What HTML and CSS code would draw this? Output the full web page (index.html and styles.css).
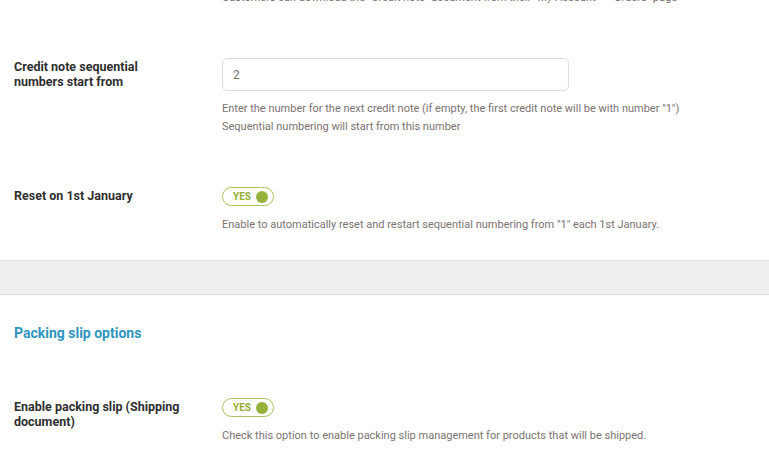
FILE: index.html
```html
<!DOCTYPE html>
<html>
<head>
<meta charset="utf-8">
<link rel="stylesheet" href="styles.css">
</head>
<body>
<div class="section">
  <div class="row row-top">
    <div class="label"></div>
    <div class="control">
      <p class="desc">Customers can download the "Credit note" document from their "My Account" &gt; "Orders" page</p>
    </div>
  </div>
  <div class="row row-number">
    <div class="label">Credit note sequential numbers start from</div>
    <div class="control">
      <input class="text-input" type="text" value="2">
      <p class="desc desc-after-input">Enter the number for the next credit note (if empty, the first credit note will be with number "1")<br>Sequential numbering will start from this number</p>
    </div>
  </div>
  <div class="row row-reset">
    <div class="label">Reset on 1st January</div>
    <div class="control">
      <span class="toggle"><span class="toggle-text">YES</span><span class="toggle-dot"></span></span>
      <p class="desc desc-after-toggle">Enable to automatically reset and restart sequential numbering from "1" each 1st January.</p>
    </div>
  </div>
</div>
<div class="band"></div>
<div class="section">
  <h2 class="heading">Packing slip options</h2>
  <div class="row row-packing">
    <div class="label">Enable packing slip (Shipping document)</div>
    <div class="control">
      <span class="toggle"><span class="toggle-text">YES</span><span class="toggle-dot"></span></span>
      <p class="desc desc-after-toggle">Check this option to enable packing slip management for products that will be shipped.</p>
    </div>
  </div>
</div>
</body>
</html>
```
FILE: styles.css
```css
html, body {
  margin: 0;
  padding: 0;
  background: #ffffff;
  overflow: hidden;
}
body {
  font-family: Roboto, "Liberation Sans", sans-serif;
  width: 769px;
  height: 452px;
}
.section {
  padding-left: 14px;
}
.row {
  display: flex;
  align-items: flex-start;
}
.label {
  width: 208px;
  flex: 0 0 208px;
  font-size: 12.5px;
  font-weight: 700;
  line-height: 15px;
  color: #2f2f2f;
  padding-top: 1px;
  padding-right: 36px;
  box-sizing: border-box;
}
.control {
  display: flex;
  flex-direction: column;
  align-items: flex-start;
}
.desc {
  margin: 0;
  font-size: 11px;
  line-height: 18px;
  color: #7b7272;
}
.row-top {
  margin-top: -11px;
}
.row-number {
  margin-top: 51px;
}
.text-input {
  width: 347px;
  height: 33px;
  box-sizing: border-box;
  border: 1px solid #dddddd;
  border-radius: 5px;
  padding: 0 10px;
  font-family: Roboto, "Liberation Sans", sans-serif;
  font-size: 12px;
  color: #7b7272;
  background: #fff;
  outline: none;
}
.desc-after-input {
  margin-top: 9px;
}
.row-reset {
  margin-top: 51px;
}
.toggle {
  display: flex;
  align-items: center;
  justify-content: space-between;
  width: 52px;
  height: 19px;
  box-sizing: border-box;
  border: 1px solid #a9c35a;
  border-radius: 10px;
  padding: 0 5px 0 10px;
}
.toggle-text {
  font-size: 10px;
  font-weight: 700;
  color: #93ad35;
  line-height: 1;
}
.toggle-dot {
  width: 12px;
  height: 12px;
  border-radius: 50%;
  background: #96b23a;
}
.desc-after-toggle {
  margin-top: 10px;
}
.band {
  margin-top: 26px;
  height: 35px;
  box-sizing: border-box;
  background: #efefef;
  border-top: 1px solid #e4e4e4;
  border-bottom: 1px solid #dedede;
}
.heading {
  margin: 28px 0 0 0;
  font-size: 14px;
  line-height: 20px;
  font-weight: 700;
  color: #2e95bf;
}
.row-packing {
  margin-top: 55px;
}
```
